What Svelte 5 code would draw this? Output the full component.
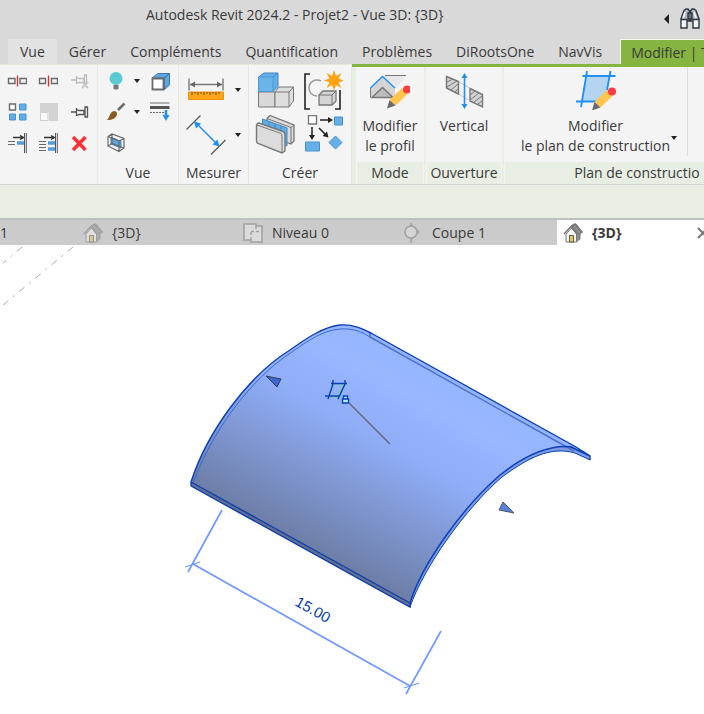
<script>
let activeTab = $state('Modifier | T');
let activeView = $state(4);

const tabs = [
    'Vue', 'Gérer', 'Compléments', 'Quantification',
    'Problèmes', 'DiRootsOne', 'NavVis', 'Modifier | T'
];

const views = [
    { id: 1, label: '{3D}', icon: 'home' },
    { id: 2, label: 'Niveau 0', icon: 'plan' },
    { id: 3, label: 'Coupe 1', icon: 'section' },
    { id: 4, label: '{3D}', icon: 'home' }
];

const editTools = [
    'split', 'splitGap', 'unpin',
    'array', 'scale', 'pin',
    'trim', 'trimMulti', 'delete'
];
</script>

{#snippet caret()}
    <svg class="caret" width="6" height="4" viewBox="0 0 6 4"><path d="M0 0h6L3 4z" fill="#222" /></svg>
{/snippet}

{#snippet pencil()}
    <path d="M31 20l5.500 6-12 11.500-6-5.500z" fill="#ffc54d" />
    <path d="M18.500 32l6 5.500-8.500 3z" fill="#6b6b6b" />
    <circle cx="36" cy="21.500" r="4" fill="#fb3b42" />
{/snippet}

{#snippet small(name)}
    <svg width="20" height="20" viewBox="0 0 20 20" fill="none" stroke="#6a6a6a">
        {#if name === 'split'}
            <path d="M8 7.500H1.500v5H8zM13 7.500h6.500v5H13z" stroke-width="1.400" />
            <path d="M10.500 4.500v11" stroke="#e32b2b" stroke-width="1.300" />
        {:else if name === 'splitGap'}
            <path d="M1.500 7.500h6v5h-6zM13.500 7.500h6v5h-6z" stroke-width="1.400" />
            <path d="M10.500 4.500v11" stroke="#e32b2b" stroke-width="1.300" />
        {:else if name === 'unpin'}
            <path d="M2 9h5M7.500 5v8M8 6.500l2 1h5v4h-5l-2 1M15.500 4v8h2V4z" stroke="#bcbcbc" stroke-width="1.300" />
            <path d="M13 11l6 6M19 11l-6 6" stroke="#c8c8c8" stroke-width="2" />
        {:else if name === 'array'}
            <path d="M2.500 2h6v6h-6z" fill="#fff" stroke-width="1.400" />
            <path d="M12.500 2h6.500v6h-6.500zM2.500 12h6v6h-6zM12.500 12h6.500v6h-6.500z" fill="#62aee8" stroke="#4a94ce" />
        {:else if name === 'scale'}
            <path d="M2 1h18v18h-9V10H2z" fill="#d3d3d3" stroke="none" />
            <path d="M2.500 10.500h7.500v8H2.500z" fill="#f9f9f9" stroke="#cfcfcf" />
        {:else if name === 'pin'}
            <path d="M2 10h5M7.500 6v8M8 7.500l2 1h5v4h-5l-2 1M16 5v10h2.500V5z" stroke="#555" stroke-width="1.300" />
        {:else if name === 'trim'}
            <path d="M6 4.500h10M13 2.500l3.500 2-3.500 2" stroke="#333" stroke-width="1.400" />
            <path d="M1 8.500h7M1 11.500h7" />
            <path d="M10 10h7" stroke="#4f9fdf" stroke-width="3.500" />
            <path d="M17.500 0v20" stroke="#555" /><path d="M19.500 0v20" stroke="#777" stroke-width="1.500" />
        {:else if name === 'trimMulti'}
            <path d="M6 4.500h10M13 2.500l3.500 2-3.500 2" stroke="#333" stroke-width="1.400" />
            <path d="M1 8.500h7M1 11.500h7M1 14.500h7M1 17.500h7" />
            <path d="M10 10h7M10 16h7" stroke="#4f9fdf" stroke-width="3.500" />
            <path d="M17.500 0v20" stroke="#555" /><path d="M19.500 0v20" stroke="#777" stroke-width="1.500" />
        {:else if name === 'delete'}
            <path d="M4 4l12.500 13M16.500 4L4 17" stroke="#fb3034" stroke-width="3.500" />
        {:else if name === 'bulb'}
            <path d="M7.500 14h5v3.500l-1 1h-3l-1-1z" fill="#777" stroke="none" />
            <circle cx="10" cy="7.500" r="6.500" fill="#5acbd3" stroke="none" />
        {:else if name === 'cube'}
            <path d="M2 7l6-4.500h11.500L14.500 7zM14.500 7l5-4.500V14l-5 4.500z" fill="#5aa7e4" stroke="#3f78a8" />
            <path d="M2.500 7.500h11v11h-11z" fill="#fff" stroke-width="1.800" />
        {:else if name === 'brush'}
            <path d="M18.500 1.500L12 8" stroke="#6c6c6c" stroke-width="2.500" />
            <path d="M0.500 18c3-1 2.500-6 6-8.500 2-1.500 5 0 4.500 3-1 4-6 6-10.500 5.500z" fill="#8a5a22" stroke="none" />
        {:else if name === 'thin'}
            <path d="M0 1h19.500" /><path d="M0 5.500h19.500" stroke="#555" stroke-width="3" />
            <path d="M0 10.500h15" stroke-dasharray="2 1" />
            <path d="M16 8v6" stroke="#2090f0" stroke-width="2.500" />
            <path d="M12.500 13h7L16 19z" fill="#2090f0" stroke="none" />
        {:else if name === 'sectionBox'}
            <path d="M5 4l10 4.500v6.500L5 11z" fill="#5aa7e4" stroke="#4580b0" />
            <path d="M2 3.500L6 1l12 4.500V15l-5 3.500L2 13zM2 3.500L13 8l5-2.500M13 8v10.500M6 1v9.500l12 4.500M6 10.500L2 13" stroke-width="1.200" />
        {/if}
    </svg>
{/snippet}

{#snippet large(name)}
    <svg width="40" height="40" viewBox="0 0 40 40" fill="none" stroke="#777">
        {#if name === 'ruler'}
            <path d="M2.500 22h35v7.500h-35z" fill="#faa51a" stroke="#ed9410" />
            <path d="M6 22v3M9 22v2M12 22v3M15 22v2M18 22v3M21 22v2M24 22v3M27 22v2M30 22v3M33 22v2" stroke="#775010" />
            <path d="M3 8.500v12M37 8.500v12M4 14.500h32" stroke-width="1.400" />
            <path d="M4 14.500l5-3v6zM36 14.500l-5-3v6z" fill="#666" stroke="none" />
        {:else if name === 'aligned'}
            <path d="M0.500 14.500L14.500 0.500M25 39.500l14.500-14.500" stroke="#555" stroke-width="1.200" />
            <path d="M10 8l22 22" stroke="#1e8ff0" stroke-width="1.400" />
            <path d="M8 6.500l7 2-5 5zM33.500 31.500l-7-2 5-5z" fill="#1e8ff0" stroke="none" />
        {:else if name === 'blocks'}
            <path d="M3.500 22H20v15H3.500z" fill="#d8d8d8" />
            <path d="M20 22l4-5h14.500v14L34 37H20z" fill="#dedede" />
            <path d="M20 22h14l4.500-5M34 22v15" />
            <path d="M3.500 7L9 3h14v13.500l-5 5H3.500z" fill="#60b0eb" stroke="#4285b8" />
            <path d="M3.500 7H18v14.500H3.500z" fill="#6bb4ea" stroke="#4d99d2" />
            <path d="M18 7l5-4" stroke="#4285b8" />
        {:else if name === 'group'}
            <path d="M7 4H2v35h5M32 39h5V20" stroke="#222" stroke-width="1.600" />
            <path d="M18 11c-6-3-12 1-12 7 0 4 3 8 8 8" stroke="#999" stroke-width="1.400" />
            <path d="M16 25l4-4h13v10l-4 4H16z" fill="#d5d5d5" stroke-width="1.300" />
            <path d="M16 25h13l4-4M29 25v10" />
            <path d="M31 0l2 6 5.500-3-3 5.500 5 2-5 2 3 5.500-5.500-3-2 5.500-2-5.500-5.500 3 3-5.500-5.500-2 5.500-2-3-5.500 5.500 3z" fill="#fca311" stroke="none" />
        {:else if name === 'parts'}
            <path d="M12 3.500L15 0.500l24 9.500v16l-3 3-24-9z" fill="#dadada" stroke-width="1.300" />
            <path d="M12 3.500l24 9V29M36 12.500l3-2.500" />
            <path d="M7.500 4L32 13v18l-24.500-9z" fill="#5faee9" stroke="#4488bc" />
            <path d="M14 7v4M20 9v4M26 11v4" stroke="#3e88c2" />
            <path d="M1.500 10Q2 8 4 8l24 8.500q2 1 2 3V36l-3 2L3 28.500q-1.500-1-1.500-3z" fill="#dcdcdc" stroke-width="1.400" />
            <path d="M2 10l24 8.500q1 1 1 3V38" />
        {:else if name === 'similar'}
            <path d="M5.500 0.500h8v8.500h-8z" fill="#fff" stroke-width="1.400" />
            <path d="M31.500 2h8v8h-8zM2.500 27h14v9h-14zM32.500 21l6.500 6.500-6.500 6.500-6.500-6.500z" fill="#65b0e8" stroke="#4792ca" />
            <path d="M17 5h9M9 12v9M16 13l7 7" stroke="#222" stroke-width="1.500" />
            <path d="M25 2l5 3-5 3zM6 20h6l-3 5zM25.500 22.500l-6-1.500 4.500-4.500z" fill="#222" stroke="none" />
        {:else if name === 'profile'}
            <path d="M0.500 18L12.500 6.500 25 18v10H0.500z" fill="#d4d4d4" stroke="none" />
            <path d="M13 6h23l-9 12z" fill="#e8e8e8" stroke="none" />
            <path d="M2 27.500l10.500-10L23 27.500z" fill="#bdbdbd" stroke="#777" stroke-width="1.500" />
            <path d="M0.500 27.500V18M15 5.500h21" />
            <path d="M0.500 18L12.500 6.500 25 18" stroke="#1e8ff0" stroke-width="1.400" />
            <g stroke="none" transform="translate(1 -2)">{@render pencil()}</g>
        {:else if name === 'vertical'}
            <path d="M2.500 6.500l12 5v12.500l-12-6zM26 18.500l12.500 6v12.500L26 31z" fill="#d3d3d3" stroke-width="1.400" />
            <path d="M3 12l6-3M3 17L13 11M7 20l7-6M11 22l3-3M26 25l5-4M26 30l9-7M30 32l8-6M34 34l4-3" />
            <path d="M15 12l11 6M15 24l11 7" stroke="#c5c5c5" />
            <path d="M20.500 6v30" stroke="#1e8ff0" stroke-width="1.600" />
            <path d="M20.500 3l3 5h-6zM20.500 39l3-5h-6z" fill="#1e8ff0" stroke="none" />
        {:else if name === 'workplane'}
            <path d="M10 6h24l-4 26H6z" fill="#b3d5f0" stroke="none" />
            <path d="M6.500 6h33M0 31.500h22M11 1L5 37M34.500 1L31 20" stroke="#1e8ff0" stroke-width="1.800" />
            <g stroke="none">{@render pencil()}</g>
        {/if}
    </svg>
{/snippet}

{#snippet viewIcon(name)}
    <svg width="20" height="20" viewBox="0 0 20 20" fill="none" stroke="#777">
        {#if name === 'home'}
            <path d="M8 4l5-3 6 8-2 1v6l-4 3z" fill="#8d8d8d" />
            <path d="M3 11l5.500-6 5 6v8H3z" fill="#f5f5f5" />
            <path d="M1 11l7.500-8 6 8.500M8.500 3L12 1l7 8-3 2" stroke-width="1.500" />
            <path d="M6.500 12.500h4V19h-4z" fill="#ecc35f" stroke="#665c45" />
        {:else if name === 'plan'}
            <path d="M1 1h12v2h6v16H8v-2H1z" fill="#ececec" stroke-width="1.500" />
            <path d="M8 9v3M8 14v3M8 8.500h3M13 8.500h3M18 8.500h1M13 3v3" stroke-width="1.400" />
        {:else}
            <path d="M8 1l9 8-9 8z" fill="#888" stroke="none" />
            <circle cx="8" cy="9" r="6" fill="#e0e0e0" stroke-width="1.500" />
            <path d="M8 0v3M8 15v5" stroke-width="1.500" />
        {/if}
    </svg>
{/snippet}

<div class="window">
    <header class="titlebar">
        <h1>Autodesk Revit 2024.2 - Projet2 - Vue 3D: {'{3D}'}</h1>
        <button class="search" aria-label="Rechercher">
            <svg width="36" height="22" viewBox="0 0 36 22">
                <path d="M5 6v10L0 11z" fill="#222" />
                <g stroke="#30363c" stroke-width="1.400">
                    <path d="M20 2.500l2-1.500h2l1.500 2V13h-4.500L17 11z" fill="#aebac5" />
                    <path d="M32 2.500L30 1h-2l-1.500 2V13H31l4-2z" fill="#aebac5" />
                    <path d="M17 11.500h6V20h-6zM29 11.500h6V20h-6z" fill="#eef3f7" />
                    <path d="M24 5h4v6h-4z" fill="#67727d" />
                </g>
                <path d="M21 4l-2 6M30 4l2 6M19 13v5M31 13v5" stroke="#fff" stroke-width="1.500" />
            </svg>
        </button>
    </header>

    <nav class="tabs">
        {#each tabs as tab}
            <button
                class:hovered={tab === 'Vue'}
                class:active={tab === activeTab}
                onclick={() => (activeTab = tab)}
            >{tab}</button>
        {/each}
    </nav>

    <div class="ribbon">
        <section class="panel edit">
            <div class="grid">
                {#each editTools as tool}
                    <button aria-label={tool}>{@render small(tool)}</button>
                {/each}
            </div>
        </section>
        <section class="panel view">
            <div class="grid">
                <button aria-label="bulb">{@render small('bulb')}</button>
                <button aria-label="bulb menu">{@render caret()}</button>
                <button aria-label="cube">{@render small('cube')}</button>
                <button aria-label="brush">{@render small('brush')}</button>
                <button aria-label="brush menu">{@render caret()}</button>
                <button aria-label="thin lines">{@render small('thin')}</button>
                <button aria-label="section box">{@render small('sectionBox')}</button>
            </div>
            <h2>Vue</h2>
        </section>
        <section class="panel measure">
            <div class="grid big">
                <button aria-label="ruler">{@render large('ruler')}</button>
                <button aria-label="ruler menu">{@render caret()}</button>
                <button aria-label="aligned">{@render large('aligned')}</button>
                <button aria-label="aligned menu">{@render caret()}</button>
            </div>
            <h2>Mesurer</h2>
        </section>
        <section class="panel create">
            <div class="grid big">
                <button aria-label="blocks">{@render large('blocks')}</button>
                <button aria-label="group">{@render large('group')}</button>
                <button aria-label="parts">{@render large('parts')}</button>
                <button aria-label="similar">{@render large('similar')}</button>
            </div>
            <h2>Créer</h2>
        </section>
        <div class="contextual">
            <section class="panel mode">
                <button class="command">{@render large('profile')}<span>Modifier<br />le profil</span></button>
                <h2>Mode</h2>
            </section>
            <section class="panel opening">
                <button class="command">{@render large('vertical')}<span>Vertical</span></button>
                <h2>Ouverture</h2>
            </section>
            <section class="panel workplane">
                <button class="command">
                    {@render large('workplane')}
                    <span>Modifier<br />le plan de construction</span>
                    {@render caret()}
                </button>
                <h2>Plan de constructio</h2>
            </section>
        </div>
    </div>

    <div class="options"></div>

    <nav class="views">
        <button class="first">1</button>
        {#each views as view}
            <div class="view-tab" class:active={view.id === activeView}>
                <button class="name" onclick={() => (activeView = view.id)}>
                    {@render viewIcon(view.icon)}
                    <span>{view.label}</span>
                </button>
                {#if view.id === activeView}
                    <button class="close" aria-label="Fermer">
                        <svg width="12" height="12" viewBox="0 0 12 12"><path d="M1 1l10 10M11 1L1 11" stroke="#777" stroke-width="2" /></svg>
                    </button>
                {/if}
            </div>
        {/each}
    </nav>

    <main>
        <svg class="scene" viewBox="0 245 704 469" fill="none">
            <defs>
                <linearGradient id="shade" gradientUnits="userSpaceOnUse" x1="300" y1="543" x2="404" y2="353">
                    <stop offset="0" stop-color="#6d7ea6" />
                    <stop offset="0.300" stop-color="#7e96d0" />
                    <stop offset="0.600" stop-color="#90adf8" />
                    <stop offset="0.850" stop-color="#98b7ff" />
                    <stop offset="1" stop-color="#95b5ff" />
                </linearGradient>
            </defs>

            <path d="M22 247L3 263M73 247L3 305" stroke="#aaa" stroke-dasharray="7 6 2 6" />

            <!-- roof surface -->
            <path
                d="M191 482C207 432 248 376 290 350C307 338 323 327 340 325C353 324 363 329 371 333L576 447L590 456V460L575 453C550 446 528 458 502 477C465 509 424 567 410 607L191 486z"
                fill="url(#shade)"
            />
            <path d="M191 482L410 603V607L191 486z" fill="#666f8a" />
            <path
                d="M410 603C422 564 462 508 500 475C524 456 548 444 572 447L590 456V460L575 453C550 446 528 458 502 477C465 509 424 567 410 607z"
                fill="#7c9ae0"
            />
            <path d="M193 484C210 434 251 378 292 352C309 340 324 330 340 329C353 328 362 332 370 337" stroke="#386bd8" />
            <path d="M370 333V337L574 451" stroke="#4f72c8" stroke-width="1.500" />
            <path
                d="M410 607C424 567 465 509 502 477C528 458 550 446 575 453L590 460"
                stroke="#0d45bd"
            />
            <path
                d="M191 486V482C207 432 248 376 290 350C307 338 323 327 340 325C353 324 363 329 371 333L576 447L590 456V460M572 447C548 444 524 456 500 475C462 508 422 564 410 603V607L191 486M191 482L410 603M571 447L590 456"
                stroke="#0a3fb5" stroke-width="1.400"
            />

            <!-- slope handles -->
            <path d="M266 376L281 379L277 387z" fill="#3b66d2" stroke="#343d55" />
            <path d="M503 502L514 513L499 510z" fill="#5a82dc" stroke="#4c536a" />

            <!-- work plane marker -->
            <path d="M333 384h12M328 397h12M334 383L329 396M344 383L338 396" stroke="#7fc5ae" stroke-width="2" />
            <path d="M331 383.500h16M325 396h14M333 380v4l-5 15M345 380v4l-7 15" stroke="#0a3fb5" stroke-width="1.400" />
            <path d="M342.500 399h6v4h-6zM343.500 399v-3h4v3" fill="#b5f0ee" stroke="#0a3fb5" stroke-width="1.400" />
            <path d="M349 403L390 444" stroke="#626579" stroke-width="1.400" />

            <!-- length dimension -->
            <g stroke="#7098ff" stroke-width="1.700">
                <path d="M222 510L188 572M441 631L406 694M193 564L410 686" />
                <path d="M185 567L200 562M404 688L419 683" stroke-width="1.200" />
            </g>
            <text transform="translate(294 605) rotate(29)" font-size="15" fill="#0a3fa8">15.00</text>
        </svg>
    </main>
</div>

<style>
:global(body) {
    margin: 0;
    background: #fff;
    overflow: hidden;
}

.window {
    display: flex;
    flex-direction: column;
    height: 100vh;
    overflow: hidden;
    font-family: "Open Sans", "Noto Sans", sans-serif;
    font-size: 14px;
    color: #3a3a3a;
}

button {
    margin: 0;
    padding: 0;
    border: none;
    background: none;
    font: inherit;
    color: inherit;
    cursor: pointer;
    white-space: nowrap;
}

svg {
    display: block;
    flex: none;
}

h1,
h2 {
    margin: 0;
    font-size: 14px;
    font-weight: 400;
}

.titlebar {
    display: flex;
    justify-content: space-between;
    padding: 4px 4px 0 146px;
    height: 35px;
    background: #d9d9d9;
}

.titlebar h1 {
    line-height: 22px;
}

.search {
    height: 30px;
}

.tabs {
    display: flex;
    height: 25px;
    padding-left: 8px;
    background: #d9d9d9;
}

.tabs button {
    padding: 0 12px;
    flex: none;
}

.tabs .hovered {
    background: #e2e2e2;
}

.tabs .active {
    flex: 1 0 auto;
    margin-left: 6px;
    padding: 0 0 0 10px;
    text-align: left;
    background: #86b440;
    border-left: 1px solid #f4f8ee;
    border-top: 1px solid #f4f8ee;
}

.ribbon {
    display: flex;
    height: 120px;
    background: #e8eee3;
    border-bottom: 1px solid #d4d4d4;
}

.panel {
    display: flex;
    flex-direction: column;
    flex: none;
    box-sizing: border-box;
    background: #f4f4f4;
    border-right: 1px solid #e3eadc;
    border-top: 1px solid #e3eadc;
}

.panel h2 {
    margin-top: auto;
    line-height: 22px;
    text-align: center;
}

.edit {
    width: 98px;
}

.view {
    width: 81px;
}

.measure {
    width: 70px;
}

.create {
    width: 103px;
}

.grid {
    display: grid;
    grid-auto-rows: 31px;
}

.grid button {
    display: grid;
    place-items: center;
}

.edit .grid {
    grid-template-columns: repeat(3, 31px);
    padding-left: 1px;
}

.view .grid {
    grid-template-columns: 32px 10px 36px;
    padding-left: 2px;
}

.big {
    grid-auto-rows: 45px;
    padding-top: 2px;
}

.measure .grid {
    grid-template-columns: 46px 18px;
    padding-left: 4px;
}

.create .grid {
    grid-template-columns: 48px 48px;
    padding-left: 2px;
}

.contextual {
    display: flex;
    flex: 1;
    min-width: 0;
    gap: 2px;
    padding-left: 4px;
    border-top: 3px solid #86b440;
    overflow: hidden;
}

.contextual .panel {
    border: none;
}

.contextual h2 {
    margin: auto 1px 0;
    background: #e8eee3;
}

.mode {
    width: 68px;
}

.opening {
    width: 76px;
}

.workplane {
    width: 266px;
}

.command {
    display: flex;
    flex-direction: column;
    align-items: center;
    gap: 6px;
    padding-top: 3px;
    line-height: 20px;
}

.workplane .command {
    position: relative;
    align-self: flex-start;
    width: 184px;
    border-right: 1px solid #dcdcdc;
}

.workplane .caret {
    position: absolute;
    right: 10px;
    bottom: 16px;
}

.options {
    height: 33px;
    background: #e8eee3;
    border-bottom: 2px solid #bfbfbf;
}

.views {
    display: flex;
    height: 25px;
    background: #cbcbcb;
}

.first {
    width: 77px;
    flex: none;
    text-align: left;
}

.view-tab {
    display: flex;
    align-items: center;
    justify-content: space-between;
    flex: none;
    box-sizing: border-box;
    width: 160px;
    padding: 0 8px 0 6px;
}

.name {
    display: flex;
    align-items: center;
    gap: 9px;
}

.view-tab:not(.active) svg {
    opacity: 0.5;
}

.view-tab.active {
    background: #fff;
    font-weight: 700;
}

main {
    flex: 1;
    min-height: 0;
    background: #fff;
}

.scene {
    width: 100%;
    height: 100%;
}

.scene text {
    font-family: "Liberation Sans", Arial, sans-serif;
}
</style>
